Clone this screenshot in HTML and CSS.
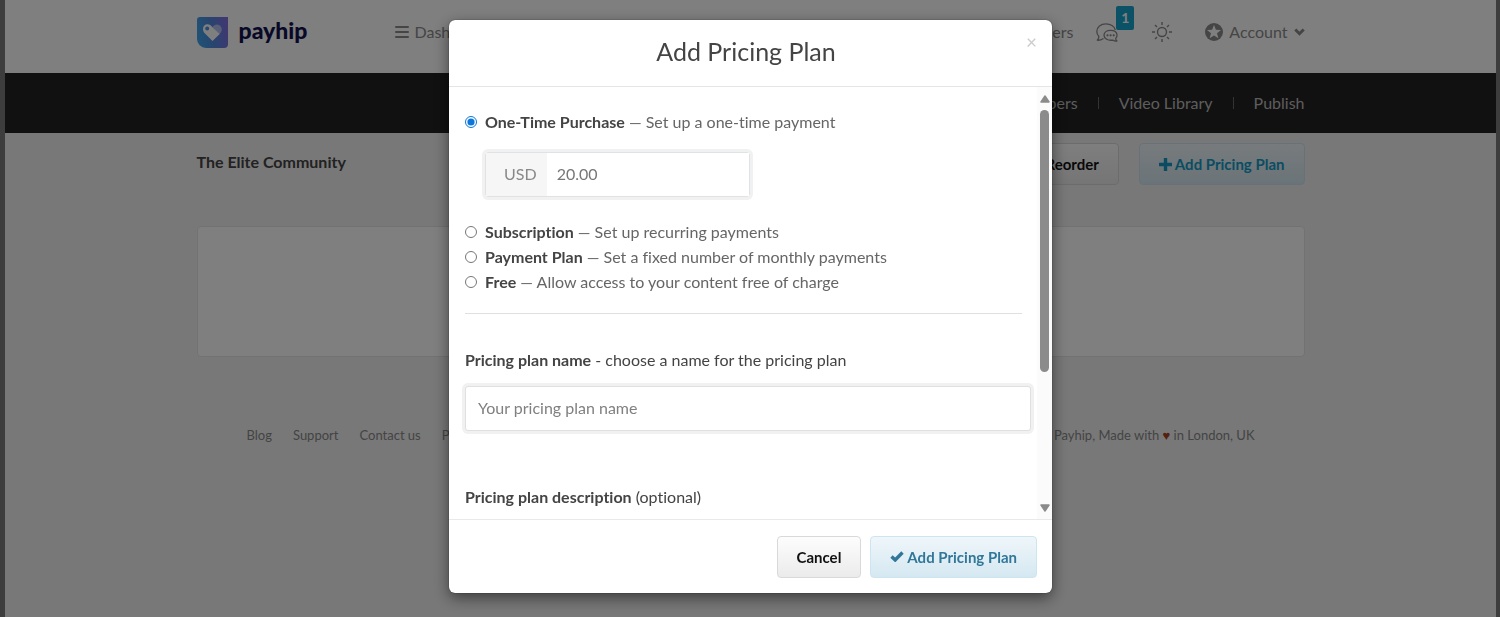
FILE: index.html
```html
<!DOCTYPE html>
<html lang="en">
<head>
<meta charset="utf-8">
<meta name="viewport" content="width=device-width, initial-scale=1">
<title>Add Pricing Plan - Payhip</title>
<link rel="stylesheet" href="styles.css">
</head>
<body>
<div class="page">
  <header class="header">
    <div class="container header-row">
      <a class="brand" href="#">
        <svg class="brand-mark" viewBox="0 0 31 31" aria-hidden="true">
          <defs>
            <linearGradient id="mark" x1="0" y1="0.6" x2="1" y2="0.4">
              <stop offset="0" stop-color="#3fa6ea"/>
              <stop offset="0.5" stop-color="#5288de"/>
              <stop offset="1" stop-color="#8070e2"/>
            </linearGradient>
          </defs>
          <path d="M3 0H31V27a4 4 0 0 1-4 4H9a9 9 0 0 1-9-9V3a3 3 0 0 1 3-3z" fill="url(#mark)"/>
          <path d="M15.500 10.200C17 7.500 20 6.800 22 8C25.500 10 25.500 14 23 16.500L22.300 17.200z" fill="#fff" opacity=".5"/>
          <path fill-rule="evenodd" d="M10.500 7.300C12.500 7.300 14 8.500 15.500 10.200L22.700 17L15.500 24L8 16.500C6.500 15 6 13.500 6 12C6 9.300 8 7.300 10.500 7.300zM10.200 9.600a2 2 0 1 0 0 4a2 2 0 0 0 0-4z" fill="#fff"/>
        </svg>
        <span class="brand-name">payhip</span>
      </a>
      <nav class="main-nav" aria-label="Main">
        <a class="nav-link" href="#">
          <svg class="icon-bars" viewBox="0 0 14 12" aria-hidden="true"><path d="M1 1H13M1 6H13M1 11H13" fill="none" stroke="currentColor" stroke-width="2" stroke-linecap="round"/></svg>
          Dashboard
        </a>
        <div class="nav-end">
          <a class="nav-link" href="#">Customers</a>
          <a class="nav-link messages" href="#" aria-label="Messages">
            <svg class="icon-chat" viewBox="0 0 22 19" aria-hidden="true"><g fill="none" stroke="currentColor" stroke-width="1.300" stroke-linejoin="round"><path d="M7.500 15.500C5.500 16.800 3.500 17.500 1.200 17.200C2.500 16 2.900 14.800 2.900 13.500C1.500 12 .8 10.300 .8 8.500C.8 4 4.800 .8 10 .8C14.500 .8 18.500 3.300 19.300 7"/><path d="M14.500 7.300C18.500 7.300 21 9.300 21 12.200C21 13.600 20.500 14.600 19.700 15.400C19.700 16.500 20 17.300 21 18C19.500 18.200 18 17.900 16.800 17.100C12 17.800 8 15.800 8 12.200C8 9.300 10.800 7.300 14.500 7.300z"/></g><g fill="currentColor"><circle cx="11.500" cy="12.300" r="1.100"/><circle cx="14.600" cy="12.300" r="1.100"/><circle cx="17.700" cy="12.300" r="1.100"/></g></svg>
            <span class="badge">1</span>
          </a>
          <button class="nav-button" type="button" aria-label="Toggle theme">
            <svg class="icon-sun" viewBox="0 0 20 20" aria-hidden="true"><g fill="none" stroke="currentColor" stroke-width="1.400"><circle cx="10" cy="10" r="4.500"/><path d="M10 0V3M10 17V20M0 10H3M17 10H20M3 3L5 5M15 15L17 17M3 17L5 15M15 5L17 3"/></g></svg>
          </button>
          <a class="nav-link account" href="#">
            <svg class="icon-star" viewBox="0 0 18 18" aria-hidden="true"><circle cx="9" cy="9" r="9" fill="currentColor"/><path d="M9 2L10.900 6.700L16 7L12 10.300L13.400 15.300L9 12.500L4.600 15.300L6 10.300L2 7L7.100 6.700z" fill="#fff"/></svg>
            Account
            <svg class="icon-caret" viewBox="0 0 11 8" aria-hidden="true"><path d="M1.300 1.500L5.500 5.700L9.700 1.500" fill="none" stroke="currentColor" stroke-width="3"/></svg>
          </a>
        </div>
      </nav>
    </div>
  </header>

  <nav class="subnav" aria-label="Community">
    <div class="container subnav-row">
      <a class="subnav-link" href="#">Members</a>
      <span class="divider"></span>
      <a class="subnav-link" href="#">Video Library</a>
      <span class="divider"></span>
      <a class="subnav-link" href="#">Publish</a>
    </div>
  </nav>

  <main class="container">
    <div class="toolbar">
      <h1 class="page-title">The Elite Community</h1>
      <div class="toolbar-actions">
        <button class="btn" type="button">Reorder</button>
        <button class="btn btn-info btn-bright" type="button">
          <svg class="icon-plus" viewBox="0 0 13 13" aria-hidden="true"><path d="M6.500 0V13M0 6.500H13" stroke="currentColor" stroke-width="3.400"/></svg>
          Add Pricing Plan
        </button>
      </div>
    </div>
    <section class="card"></section>
  </main>

  <footer class="container footer">
    <nav class="footer-links" aria-label="Footer">
      <a href="#">Blog</a>
      <a href="#">Support</a>
      <a href="#">Contact us</a>
      <a href="#">Privacy</a>
    </nav>
    <p class="footer-note">© Payhip, Made with <span class="heart">♥</span> in London, UK</p>
  </footer>
</div>

<div class="overlay">
  <form class="modal" role="dialog" aria-modal="true" aria-labelledby="modal-title">
    <div class="modal-header">
      <h2 class="modal-title" id="modal-title">Add Pricing Plan</h2>
      <button class="close" type="button" aria-label="Close">×</button>
    </div>
    <div class="modal-main">
      <div class="modal-body">
        <div class="plan-options">
          <label class="option"><input class="radio" type="radio" name="plan" checked><span><strong>One-Time Purchase</strong> — Set up a one-time payment</span></label>
          <div class="price">
            <label class="price-unit" for="price">USD</label>
            <input class="price-input" id="price" type="text" value="20.00">
          </div>
          <label class="option"><input class="radio" type="radio" name="plan"><span><strong>Subscription</strong> — Set up recurring payments</span></label>
          <label class="option"><input class="radio" type="radio" name="plan"><span><strong>Payment Plan</strong> — Set a fixed number of monthly payments</span></label>
          <label class="option"><input class="radio" type="radio" name="plan"><span><strong>Free</strong> — Allow access to your content free of charge</span></label>
        </div>
        <div class="field">
          <label class="field-label" for="plan-name"><strong>Pricing plan name</strong> - choose a name for the pricing plan</label>
          <input class="text-input" id="plan-name" type="text" placeholder="Your pricing plan name">
        </div>
        <div class="field">
          <label class="field-label" for="plan-description"><strong>Pricing plan description</strong> (optional)</label>
          <textarea class="text-input" id="plan-description" rows="4"></textarea>
        </div>
      </div>
      <div class="scrollbar" aria-hidden="true">
        <svg class="scroll-arrow" viewBox="0 0 10 8"><path d="M5 1L9 7H1z" fill="currentColor" stroke="currentColor" stroke-width="1.500" stroke-linejoin="round"/></svg>
        <div class="scroll-track"><div class="scroll-thumb"></div></div>
        <svg class="scroll-arrow" viewBox="0 0 10 8"><path d="M5 7L9 1H1z" fill="currentColor" stroke="currentColor" stroke-width="1.500" stroke-linejoin="round"/></svg>
      </div>
    </div>
    <div class="modal-footer">
      <button class="btn" type="button">Cancel</button>
      <button class="btn btn-info" type="submit">
        <svg class="icon-check" viewBox="0 0 14 11" aria-hidden="true"><path d="M1.500 5.500L5.200 9L12.500 1.500" fill="none" stroke="currentColor" stroke-width="3.400"/></svg>
        Add Pricing Plan
      </button>
    </div>
  </form>
</div>
</body>
</html>
```

FILE: styles.css
```css
* {
  box-sizing: border-box;
}

body {
  margin: 0;
  min-height: 100vh;
  padding: 0 4px 0 5px;
  background: #7a7a7a;
  color: #444;
  font-family: Lato, "Liberation Sans", sans-serif;
  font-size: 16px;
  font-variant-ligatures: none;
  line-height: 24px;
}

a {
  color: inherit;
  text-decoration: none;
}

button,
input,
textarea {
  font: inherit;
}

h1,
h2,
p {
  margin: 0;
}

svg {
  display: block;
  flex: none;
}

.page {
  min-height: 100vh;
  background: #f1f1f1;
}

.container {
  width: 100%;
  max-width: 1108px;
  margin: 0 auto;
}

/* Header */

.header {
  background: #fff;
}

.header-row {
  display: flex;
  align-items: center;
  height: 73px;
  padding-bottom: 9px;
}

.brand {
  display: flex;
  align-items: center;
  gap: 11px;
  width: 198px;
}

.brand-mark {
  width: 31px;
  height: 31px;
}

.brand-name {
  color: #13134f;
  font-size: 23px;
  font-weight: 900;
  padding-bottom: 5px;
}

.main-nav {
  display: flex;
  flex: 1;
  justify-content: space-between;
  color: #8a8a8a;
}

.nav-link,
.nav-end {
  display: flex;
  align-items: center;
}

.nav-link {
  gap: 6px;
}

.icon-bars {
  width: 14px;
  height: 12px;
}

.messages {
  position: relative;
  margin: 0 34px 0 23px;
}

.icon-chat {
  width: 22px;
  height: 19px;
}

.badge {
  position: absolute;
  top: -17px;
  left: 20px;
  padding: 0 5px;
  border-radius: 2px;
  background: #19a5cf;
  color: #fff;
  font-size: 14px;
  font-weight: 700;
}

.nav-button {
  padding: 0;
  border: 0;
  background: none;
  color: inherit;
}

.icon-sun {
  width: 20px;
  height: 20px;
}

.account {
  margin-left: 33px;
}

.icon-star {
  width: 18px;
  height: 18px;
}

.icon-caret {
  width: 11px;
  height: 8px;
}

.subnav {
  background: #222;
  color: #bbb;
}

.subnav-row {
  display: flex;
  align-items: center;
  justify-content: flex-end;
  gap: 20px;
  height: 60px;
  padding-bottom: 1px;
}

.divider {
  width: 1px;
  height: 12px;
  background: #666;
}

/* Content */

.toolbar {
  display: flex;
  align-items: flex-start;
  justify-content: space-between;
  padding-top: 10px;
}

.page-title {
  padding-top: 7px;
  font-size: 16px;
  font-weight: 700;
}

.toolbar-actions {
  display: flex;
  gap: 20px;
}

.btn {
  display: flex;
  align-items: center;
  gap: 3px;
  height: 42px;
  padding: 0 19px;
  border: 1px solid #d9d9d9;
  border-radius: 4px;
  background: linear-gradient(#fdfdfd, #ebebeb);
  color: #111;
  font-size: 15px;
  font-weight: 700;
}

.btn-info {
  border-color: #cde5f0;
  background: linear-gradient(#eff6fa, #d5e8f1);
  color: #31779a;
}

.btn-bright {
  color: #149bc5;
}

.icon-plus {
  width: 13px;
  height: 13px;
}

.icon-check {
  width: 14px;
  height: 11px;
}

.card {
  height: 131px;
  margin-top: 41px;
  border: 1px solid #e4e4e4;
  border-radius: 4px;
  background: #fff;
}

.footer {
  display: flex;
  justify-content: space-between;
  padding: 66px 50px;
  color: #888;
  font-size: 13px;
}

.footer-links {
  display: flex;
  gap: 21px;
}

.heart {
  color: #a8401f;
}

/* Modal */

.overlay {
  position: fixed;
  inset: 0;
  display: flex;
  align-items: flex-start;
  justify-content: center;
  padding: 20px 4px 0 5px;
  background: rgba(0, 0, 0, 0.5);
}

.modal {
  width: 100%;
  max-width: 603px;
  border-radius: 6px;
  background: #fff;
  box-shadow: 0 5px 15px rgba(0, 0, 0, 0.5), 0 0 1px #000;
}

.modal-header {
  position: relative;
  padding: 15px 25px 18px 16px;
  border-bottom: 1px solid #e5e5e5;
  text-align: center;
}

.modal-title {
  font-size: 25px;
  font-weight: 400;
  line-height: 33px;
}

.close {
  position: absolute;
  top: 10px;
  right: 12px;
  padding: 0 3px;
  border: 0;
  background: none;
  color: #ccc;
  font-size: 19px;
}

.modal-main {
  display: flex;
  height: 70vh;
}

.modal-body {
  flex: 1;
  overflow: hidden;
  padding: 22px 6px 0 16px;
}

.plan-options {
  margin-right: 9px;
  padding-bottom: 19px;
  border-bottom: 1px solid #e0e0e0;
}

.option {
  display: flex;
  align-items: center;
  gap: 8px;
  height: 25px;
  color: #666;
}

strong {
  color: #444;
  font-weight: 700;
}

.radio {
  width: 12px;
  height: 12px;
  margin: 0;
  accent-color: #0b76dd;
}

.price {
  display: flex;
  width: 265px;
  height: 45px;
  margin: 18px 0 22px 20px;
  border: 1px solid #e0e3e6;
  border-radius: 3px;
  box-shadow: 0 0 0 3px #f1f1f1;
}

.price-unit {
  padding: 9px 10px 10px 18px;
  background: #f6f6f6;
  color: #888;
}

.price-input {
  flex: 1;
  min-width: 0;
  padding: 0 10px 1px;
  border: 0;
  color: #777;
}

.field {
  padding-top: 34px;
}

.field + .field {
  padding-top: 54px;
}

.field-label {
  display: block;
  margin-bottom: 14px;
}

.text-input {
  display: block;
  width: 100%;
  padding: 9px 12px 10px;
  border: 1px solid #e0e0e0;
  border-radius: 3px;
  background: #fff;
  box-shadow: 0 0 0 3px #f1f1f1;
  color: #555;
}

.text-input::placeholder {
  color: #808080;
}

.scrollbar {
  display: flex;
  flex-direction: column;
  align-items: center;
  gap: 3px;
  width: 15px;
  padding: 8px 0 7px;
  background: #fbfbfb;
  color: #8b8b8b;
}

.scroll-arrow {
  width: 10px;
  height: 8px;
}

.scroll-track {
  flex: 1;
  padding-top: 4px;
}

.scroll-thumb {
  width: 9px;
  height: 67%;
  border-radius: 5px;
  background: #8b8b8b;
}

.modal-footer {
  display: flex;
  justify-content: flex-end;
  gap: 9px;
  padding: 16px 15px 15px;
  border-top: 1px solid #e9e9e9;
}
```
